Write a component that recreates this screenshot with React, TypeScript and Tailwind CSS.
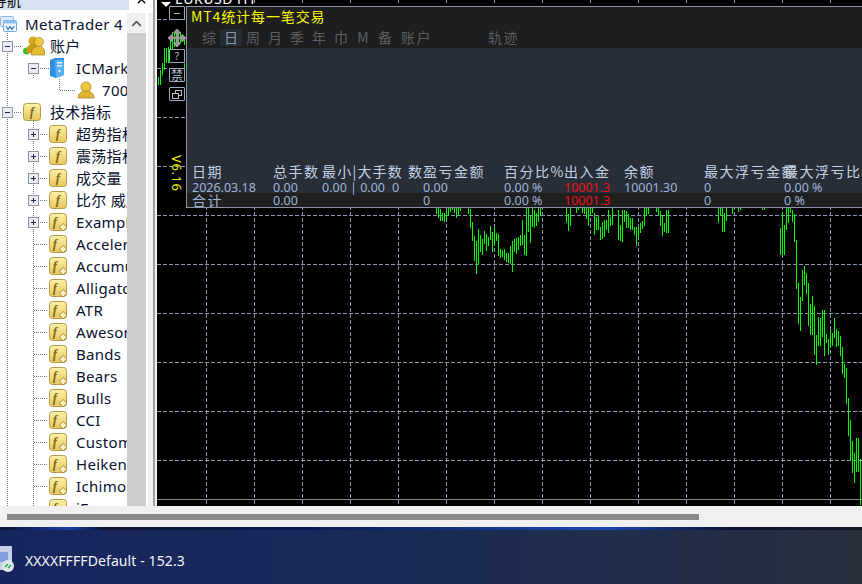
import React from 'react';
import { ChevronUp, Move, X } from 'lucide-react';

const cjk = "font-['Noto_Sans','Noto_Sans_CJK_SC',sans-serif]";
const panelFont = "font-['Noto_Sans_CJK_SC','Noto_Sans',sans-serif]";

// bar lists are read off the chart as [x, y1, y2], relative to a crop scaled 3x
type Bar = [number, number, number];
const section = (ox: number, oy: number, bars: Bar[]) =>
  bars.map(([x, a, b]) => [ox + Math.floor(x / 3), oy + a / 3, oy + b / 3] as Bar);

const bars: Bar[] = [
  ...section(150, 20, [
    [24, 170, 195], [30, 150, 195], [36, 130, 165], [42, 85, 150], [48, 85, 130], [54, 80, 130], [60, 60, 90],
    [66, 35, 90], [72, 35, 80], [78, 35, 80], [84, 35, 70], [90, 35, 70], [96, 45, 65], [102, 55, 75], [102, 130, 170],
  ]),
  ...section(430, 205, [
    [18, 9, 27], [24, 9, 40], [30, 12, 47], [36, 25, 47], [42, 25, 50], [48, 15, 42], [54, 9, 33], [60, 9, 20], [66, 9, 15],
    [72, 9, 25], [78, 9, 38], [84, 9, 30], [90, 9, 18], [114, 9, 27], [120, 12, 70], [126, 50, 108], [132, 93, 168],
    [138, 108, 207], [144, 72, 180], [150, 90, 140], [156, 102, 150], [162, 78, 117], [168, 87, 138], [174, 96, 123],
    [180, 63, 105], [186, 81, 141], [192, 69, 117], [198, 84, 108], [204, 87, 153], [210, 132, 158], [216, 135, 156],
    [222, 132, 165], [228, 144, 171], [234, 144, 174], [240, 123, 177], [246, 108, 201], [252, 102, 141], [258, 99, 147],
    [264, 96, 135], [270, 90, 123], [276, 45, 120], [282, 90, 150], [288, 9, 153], [294, 9, 81], [300, 33, 114],
    [306, 9, 66], [312, 15, 69], [318, 24, 63], [324, 9, 51], [330, 9, 33],
  ]),
  ...section(550, 205, [
    [48, 9, 54], [54, 27, 78], [60, 9, 63], [78, 9, 24], [84, 9, 15], [96, 9, 24], [102, 9, 27], [108, 9, 42], [114, 9, 63],
    [120, 9, 30], [126, 9, 24], [132, 24, 90], [138, 36, 75], [144, 33, 75], [150, 66, 105], [156, 51, 102], [162, 45, 96],
    [168, 45, 75], [174, 15, 84], [180, 36, 63], [186, 9, 60], [204, 15, 105], [210, 60, 108], [216, 15, 111], [222, 15, 51],
    [228, 18, 69], [234, 27, 69], [240, 39, 75], [246, 39, 75], [252, 66, 90], [258, 66, 123], [264, 69, 96], [270, 54, 84],
    [276, 48, 72], [282, 9, 63], [288, 9, 33], [294, 9, 27], [318, 9, 21], [324, 9, 33], [330, 18, 63], [336, 30, 93],
    [342, 54, 81], [348, 15, 84], [354, 15, 84],
  ]),
  ...section(700, 205, [
    [54, 9, 54], [60, 9, 33], [66, 9, 81], [72, 24, 81], [78, 9, 48], [96, 9, 27], [114, 9, 21], [120, 9, 15], [186, 9, 15],
    [192, 9, 15], [240, 69, 150], [246, 21, 150], [252, 60, 150], [258, 9, 75], [264, 9, 54], [270, 9, 24], [276, 15, 51],
    [282, 27, 111],
  ]),
  ...section(640, 260, [
    [469, -60, 87], [475, 69, 192], [481, 111, 213], [487, 30, 123], [493, 18, 75], [499, 39, 102], [505, 69, 198],
    [511, 132, 225], [517, 108, 225], [523, 138, 285], [529, 225, 315], [535, 171, 258], [541, 174, 258], [547, 150, 231],
    [553, 150, 288], [559, 222, 249], [565, 237, 285], [571, 210, 261], [577, 219, 258], [583, 174, 234], [589, 207, 261],
    [595, 213, 258], [601, 228, 288], [607, 261, 342], [613, 312, 354], [619, 324, 432], [625, 414, 528], [631, 480, 603],
    [637, 543, 639], [643, 579, 669], [649, 534, 636], [655, 534, 636], [661, 597, 735],
  ]),
];

const gridX = [206, 254, 302, 350, 398, 446, 494, 542, 590, 638, 686, 734, 782, 830];
const gridY = [19, 68, 117, 166, 215, 264, 313, 362, 411, 460];

function Chart() {
  return (
    <svg className="block h-full w-full" viewBox="157 0 705 506" shapeRendering="crispEdges">
      {gridX.map((x) => (
        <line key={x} x1={x + 0.5} x2={x + 0.5} y1={8} y2={506} stroke="#8496ad" strokeDasharray="4 2" />
      ))}
      {gridX.map((x) => (
        <line key={x} x1={x + 0.5} x2={x + 0.5} y1={0} y2={3} stroke="#8b98aa" />
      ))}
      {gridY.map((y) => (
        <line key={y} x1={157} x2={862} y1={y + 0.5} y2={y + 0.5} stroke="#8496ad" strokeDasharray="4 2" />
      ))}
      <line x1={157} x2={862} y1={499.5} y2={499.5} stroke="#7d8896" />
      {bars.map(([x, a, b], i) => (
        <rect key={i} x={x} y={a} width={1} height={b - a} fill="#00ff00" />
      ))}
    </svg>
  );
}

function Expander({ open }: { open: boolean }) {
  return (
    <svg width="11" height="11" viewBox="0 0 11 11" className="shrink-0" shapeRendering="crispEdges">
      <rect x="0.5" y="0.5" width="10" height="10" rx="1" fill="#e9ecf2" stroke="#8d95a5" />
      <rect x="3" y="5" width="5" height="1" fill="#1c2a55" />
      {!open && <rect x="5" y="3" width="1" height="5" fill="#1c2a55" />}
    </svg>
  );
}

function FIcon({ diamond }: { diamond?: boolean }) {
  return (
    <svg width="19" height="19" viewBox="0 0 19 19" className="shrink-0">
      <defs>
        <linearGradient id="fy" x1="0" y1="0" x2="0" y2="1">
          <stop offset="0" stopColor="#fdf0a8" />
          <stop offset="1" stopColor="#e9c75c" />
        </linearGradient>
      </defs>
      <rect x="0.5" y="0.5" width="17" height="17" rx="3" fill="url(#fy)" stroke="#b59a48" />
      <text x={diamond ? 6 : 9} y="13" textAnchor="middle" fontSize="13" fontStyle="italic" fontWeight="700" fontFamily="Liberation Serif" fill="#7d6a20">f</text>
      {diamond && <path d="M14 10.5 L18 14.2 L14 18 L10.5 14.2 Z" fill="#fff3c0" stroke="#a58c3c" />}
    </svg>
  );
}

function UsersIcon() {
  return (
    <svg width="22" height="20" viewBox="0 0 22 20" className="shrink-0">
      <circle cx="3.5" cy="15" r="3.5" fill="#3cc12a" />
      <circle cx="10" cy="5" r="4.5" fill="#d8a91f" />
      <path d="M3 15 C3 10 7 8 10 8 C13 8 15 10 15 13 L12 17 H4 Z" fill="#c99a1c" />
      <circle cx="16" cy="6" r="4.5" fill="#f0c93f" stroke="#9a7a1c" strokeWidth="0.6" />
      <path d="M8 19 C8 13 12 10 16 10 C20 10 22 14 22 19 Z" fill="#e8bb34" stroke="#9a7a1c" strokeWidth="0.6" />
    </svg>
  );
}

function UserIcon() {
  return (
    <svg width="18" height="18" viewBox="0 0 18 18" className="shrink-0">
      <circle cx="9" cy="6" r="5" fill="#efc63c" stroke="#9a7a1c" strokeWidth="0.7" />
      <path d="M1 17 C1 12 5 10 9 10 C13 10 17 12 17 17 Z" fill="#e3b42f" stroke="#9a7a1c" strokeWidth="0.7" />
    </svg>
  );
}

function ServerIcon() {
  return (
    <svg width="16" height="20" viewBox="0 0 16 20" className="shrink-0">
      <path d="M1 2 L6 0 H15 V17 L7 20 L1 18 Z" fill="#2f8ee0" />
      <path d="M6 2 H15 V17 L7 20 Z" fill="#55b2f2" />
      <rect x="8" y="4" width="5" height="1.5" fill="#e8f6ff" />
      <rect x="8" y="7" width="5" height="1.5" fill="#e8f6ff" />
      <circle cx="10.5" cy="13" r="1.2" fill="#e8f6ff" />
    </svg>
  );
}

function TerminalIcon() {
  return (
    <svg width="17" height="16" viewBox="0 0 17 16" className="shrink-0">
      <rect x="0.5" y="0.5" width="13" height="10" rx="1" fill="#dcecfb" stroke="#8db9e6" />
      <rect x="3.5" y="4.5" width="13" height="11" rx="1" fill="#eef6fd" stroke="#6ea6de" />
      <rect x="3.5" y="4.5" width="13" height="3" fill="#8fc0ee" />
      <path d="M6 10 L8 13.5 L10 10.5 L12 13.5 L14 10" fill="none" stroke="#2b6fc0" strokeWidth="1.1" />
    </svg>
  );
}

const indicatorsA = ['超势指标', '震荡指标', '成交量', '比尔 威廉姆斯'];
const indicatorsB = ['Accelerator', 'Accumulation', 'Alligator', 'ATR', 'Awesome', 'Bands', 'Bears', 'Bulls', 'CCI', 'Custom', 'Heiken', 'Ichimoku', 'iExposure'];

function TreeRow({ pad, expander, icon, label, labelClass }: { pad: string; expander?: 'open' | 'closed'; icon: React.ReactNode; label: string; labelClass?: string }) {
  return (
    <div className={`relative flex h-[22px] items-center whitespace-nowrap ${pad}`}>
      {expander ? <Expander open={expander === 'open'} /> : <span className="w-[11px] shrink-0" />}
      <span className="ml-[10px] mr-[7px] flex w-[20px] shrink-0 items-center">{icon}</span>
      <span className={labelClass}>{label}</span>
    </div>
  );
}

function TreeLines() {
  const cy = (i: number) => 11.5 + 22 * i;
  const dot = { stroke: '#777', strokeDasharray: '1 1' };
  return (
    <svg className="absolute left-0 top-0" width="127" height="493" shapeRendering="crispEdges">
      <line x1="7.5" x2="7.5" y1="20" y2="493" {...dot} />
      <line x1="33.5" x2="33.5" y1="60" y2="66" {...dot} />
      <line x1="59.5" x2="59.5" y1="66" y2="77" {...dot} />
      <line x1="59.5" x2="75" y1={cy(3)} y2={cy(3)} {...dot} />
      <line x1="33.5" x2="33.5" y1="106" y2="493" {...dot} />
      <line x1="12" x2="22" y1={cy(1)} y2={cy(1)} {...dot} />
      <line x1="12" x2="22" y1={cy(4)} y2={cy(4)} {...dot} />
      <line x1="38" x2="50" y1={cy(2)} y2={cy(2)} {...dot} />
      {Array.from({ length: 18 }, (_, n) => (
        <line key={n} x1="34" x2="48" y1={cy(n + 5)} y2={cy(n + 5)} {...dot} />
      ))}
    </svg>
  );
}

function Navigator() {
  return (
    <div className="flex h-full w-[153px] shrink-0 flex-col bg-[#f0f0f0]">
      <div className="flex h-[13px] shrink-0 bg-white">
        <div className={`h-[10px] w-[129px] overflow-hidden bg-[#d5e3f0] text-[14px] leading-[14px] text-black ${cjk}`}>
          <div className="-mt-[6px] -ml-[7px]">导航</div>
        </div>
        <div className="flex flex-1 justify-center overflow-hidden">
          <X size={13} strokeWidth={2.5} className="-mt-[7px] text-black" />
        </div>
      </div>
      <div className="flex min-h-0 flex-1">
        <div className={`relative w-[127px] shrink-0 overflow-hidden bg-white text-[15px] tracking-[0.3px] text-[#0a1230] ${cjk}`}>
          <TreeLines />
          <div className="relative flex h-[22px] items-center whitespace-nowrap">
            <span className="mr-[8px]"><TerminalIcon /></span>
            <span className="tracking-[0.3px]">MetaTrader 4</span>
          </div>
          <TreeRow pad="pl-[2px]" expander="open" icon={<UsersIcon />} label="账户" />
          <TreeRow pad="pl-[28px]" expander="open" icon={<ServerIcon />} label="ICMarkets" />
          <TreeRow pad="pl-[56px]" icon={<UserIcon />} label="70012345" labelClass="-ml-[2px]" />
          <TreeRow pad="pl-[2px]" expander="open" icon={<FIcon />} label="技术指标" />
          {indicatorsA.map((t) => (
            <TreeRow key={t} pad="pl-[28px]" expander="closed" icon={<FIcon />} label={t} />
          ))}
          <TreeRow pad="pl-[28px]" expander="closed" icon={<FIcon diamond />} label="Examples" />
          {indicatorsB.map((t) => (
            <TreeRow key={t} pad="pl-[28px]" icon={<FIcon diamond />} label={t} />
          ))}
        </div>
        <div className="flex w-[19px] shrink-0 flex-col bg-[#cdcdcd]">
          <div className="flex h-[20px] items-center justify-center bg-[#f0f0f0]">
            <ChevronUp size={15} strokeWidth={2.5} className="text-[#555]" />
          </div>
        </div>
        <div className="flex-1 border-l-2 border-white" />
      </div>
    </div>
  );
}

function SideButton({ children, className }: { children: React.ReactNode; className: string }) {
  return (
    <div className={`absolute left-[12px] flex h-[14px] w-[16px] items-center justify-center rounded-[1px] border border-[#9aaac0] bg-black text-[#b4c2d5] ${className}`}>
      {children}
    </div>
  );
}

const tabs = ['综', '日', '周', '月', '季', '年', '巾', 'M', '备'];

const cols = 'grid grid-cols-[81px_49px_70px_31px_81px_60px_60px_80px_80px_80px] whitespace-nowrap pl-[5px]';

function StatsPanel() {
  return (
    <div className={`absolute left-[29px] right-0 top-[6px] flex h-[202px] flex-col overflow-hidden border-b border-l border-t border-[#8a93a6] bg-[#282e37] ${panelFont}`}>
      <div className="h-[41px] shrink-0 bg-[#1e1e1e]">
        <div className="flex h-[19px] items-center pl-[4px] text-[14px] tracking-[0.9px] text-[#f5f500]">MT4统计每一笔交易</div>
        <div className="mt-[1px] flex h-[21px] items-center pl-[11px] text-[14px] text-[#5a5f65]">
          {tabs.map((t) => (
            <span
              key={t}
              className={t === '日' ? 'flex h-[17px] w-[22px] items-center justify-center rounded-[2px] bg-[#252c35] text-[#8b97a8]' : 'flex w-[22px] justify-center'}
            >
              {t}
            </span>
          ))}
          <span className="ml-[5px] tracking-[1.5px]">账户</span>
          <span className="ml-[56px] tracking-[1.5px]">轨迹</span>
        </div>
      </div>
      <div className="flex-1" />
      <div className={`${cols} h-[18px] -translate-y-[1px] items-center text-[14px] tracking-[1.5px] text-[#c3d0e3]`}>
        <span>日期</span>
        <span>总手数</span>
        <span className="tracking-[1.2px]">最小|大手数</span>
        <span className="pl-[16px]">数</span>
        <span>盈亏金额</span>
        <span>百分比%</span>
        <span>出入金</span>
        <span>余额</span>
        <span>最大浮亏金额</span>
        <span>最大浮亏比</span>
      </div>
      <div className={`${cols} h-[13px] translate-y-[1px] items-center font-['Noto_Sans',sans-serif] text-[12.5px] leading-[13px] text-[#9db3d6]`}>
        <span>2026.03.18</span>
        <span>0.00</span>
        <span>0.00 | 0.00</span>
        <span>0</span>
        <span>0.00</span>
        <span>0.00 %</span>
        <span className="text-[#ee101c]">10001.3</span>
        <span>10001.30</span>
        <span>0</span>
        <span>0.00 %</span>
      </div>
      <div className={`${cols} h-[14px] shrink-0 items-center overflow-hidden bg-[#201f1f] font-['Noto_Sans',sans-serif] text-[12.5px] leading-[13px] text-[#9db3d6]`}>
        <span className={`${panelFont} text-[14px] tracking-[1.5px]`}>合计</span>
        <span>0.00</span>
        <span />
        <span />
        <span>0</span>
        <span>0.00 %</span>
        <span className="text-[#ee101c]">10001.3</span>
        <span />
        <span>0</span>
        <span>0 %</span>
      </div>
    </div>
  );
}

function ChartArea() {
  return (
    <div className="relative min-w-0 flex-1 overflow-hidden bg-black">
      <Chart />
      <svg className="absolute left-[4px] top-[2px]" width="10" height="5" viewBox="0 0 10 5">
        <path d="M0 0 H10 L5 5 Z" fill="#fff" />
      </svg>
      <div className="absolute -top-[8px] left-[18px] font-['Noto_Sans',sans-serif] text-[14px] leading-[14px] tracking-[0.5px] text-white">EURUSD H1</div>

      <SideButton className="top-[6px]">
        <span className="h-px w-[6px] bg-[#b4c2d5]" />
      </SideButton>
      <Move size={18} strokeWidth={3.5} className="absolute left-[11px] top-[29px] text-[#9a9a9a]" />
      <SideButton className="top-[49px]">
        <span className="font-['Noto_Sans',sans-serif] text-[10px] leading-none">?</span>
      </SideButton>
      <SideButton className="top-[68px]">
        <span className={`${panelFont} text-[12px] leading-none`}>禁</span>
      </SideButton>
      <SideButton className="top-[87px]">
        <svg width="10" height="9" viewBox="0 0 10 9" shapeRendering="crispEdges" fill="none" stroke="currentColor">
          <rect x="3.5" y="0.5" width="6" height="5" />
          <rect x="0.5" y="3.5" width="6" height="5" fill="#000" />
        </svg>
      </SideButton>

      <StatsPanel />

      <div className="absolute left-[13px] top-[155px] whitespace-nowrap font-['Noto_Sans',sans-serif] text-[13px] leading-[14px] tracking-[0.6px] text-[#f5f500] [writing-mode:vertical-rl]">
        V6.16
      </div>
    </div>
  );
}

function RemoteIcon() {
  return (
    <svg width="20" height="32" viewBox="0 0 20 32" className="shrink-0">
      <rect x="-6" y="2" width="18" height="24" rx="1" fill="#c6d2e4" />
      <rect x="-6" y="8" width="14" height="10" fill="#7f9fe0" />
      <circle cx="8" cy="22" r="6" fill="#dfe9e5" />
      <path d="M5 23 L8 20 M11 21 L8 24" stroke="#2e9a57" strokeWidth="1.3" fill="none" />
    </svg>
  );
}

export default function App() {
  return (
    <div className="flex h-[584px] w-[862px] flex-col overflow-hidden bg-[#f0f0f0]">
      <div className="flex h-[506px] shrink-0">
        <Navigator />
        <div className="w-[2px] shrink-0 bg-[#a0a0a0]" />
        <div className="w-[2px] shrink-0 bg-[#f4f4f4]" />
        <ChartArea />
      </div>
      <div className="flex h-[21px] shrink-0 items-center pl-[7px]">
        <div className="h-[6px] w-[692px] bg-[#8a8a8a]" />
      </div>
      <div className="h-[3px] shrink-0 bg-[linear-gradient(90deg,#0a1030_0%,#1d3fa8_8%,#0a1230_12%,#0a1a50_35%,#1c49b8_70%,#0a1030_85%,#101622_100%)]" />
      <div className="flex min-h-0 flex-1 items-center bg-[linear-gradient(90deg,#17255e_0%,#1a2a58_45%,#222e48_80%,#27303c_100%)] pt-[6px]">
        <RemoteIcon />
        <div className="ml-[5px] w-[160px] overflow-hidden whitespace-nowrap font-['Noto_Sans',sans-serif] text-[14px] tracking-[0.1px] text-[#f2f4f8]">
          XXXXFFFFDefault - 152.32.10
        </div>
      </div>
    </div>
  );
}
